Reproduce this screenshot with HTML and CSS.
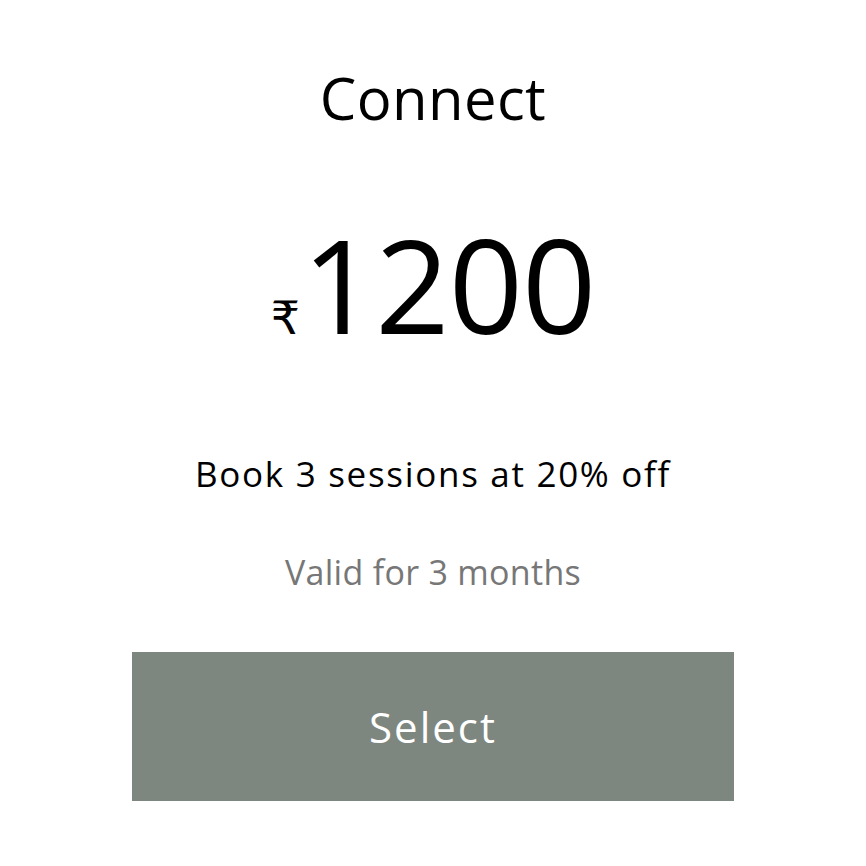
FILE: index.html
```html
<!DOCTYPE html>
<html lang="en">
<head>
<meta charset="utf-8">
<title>Connect</title>
<link rel="stylesheet" href="styles.css">
</head>
<body>
<main class="plan">
  <h1 class="plan-title">Connect</h1>
  <div class="plan-price"><span class="currency">₹</span><span class="amount">1200</span></div>
  <p class="plan-desc">Book 3 sessions at 20% off</p>
  <p class="plan-validity">Valid for 3 months</p>
  <button class="plan-select" type="button">Select</button>
</main>
</body>
</html>
```
FILE: styles.css
```css
html, body {
  margin: 0;
  padding: 0;
  background: #ffffff;
}
body {
  font-family: "Open Sans", "Lato", sans-serif;
  color: #000;
}
.plan {
  width: 866px;
  display: flex;
  flex-direction: column;
  align-items: center;
  padding-top: 62px;
}
.plan-title {
  margin: 0;
  font-size: 58px;
  font-weight: 400;
  line-height: 72px;
  letter-spacing: 0.4px;
}
.plan-price {
  margin-top: 85px;
  display: flex;
  align-items: baseline;
  line-height: 1;
}
.currency {
  font-family: "DejaVu Sans", sans-serif;
  font-size: 46px;
  margin-right: 2px;
}
.amount {
  font-size: 130px;
  letter-spacing: -1px;
}
.plan-desc {
  margin: 103px 0 0;
  font-size: 35px;
  line-height: 44px;
  letter-spacing: 1.7px;
}
.plan-validity {
  margin: 54px 0 0;
  font-size: 34px;
  line-height: 44px;
  letter-spacing: 0.3px;
  color: #777777;
}
.plan-select {
  margin-top: 58px;
  width: 602px;
  height: 149px;
  border: none;
  background: #7e8680;
  color: #ffffff;
  font-family: inherit;
  font-size: 42px;
  letter-spacing: 2px;
  cursor: pointer;
}
```
